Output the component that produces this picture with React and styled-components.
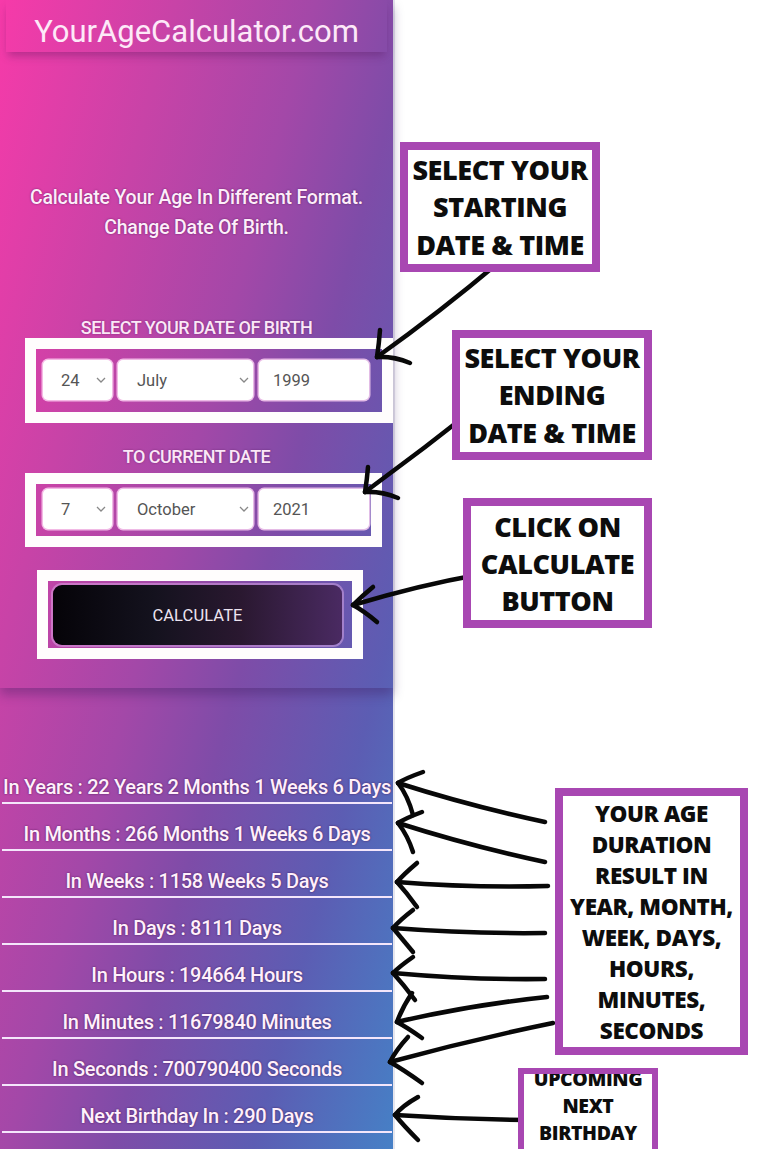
import React from "react";
import styled, { createGlobalStyle } from "styled-components";

const GlobalStyle = createGlobalStyle`
  html, body { margin: 0; padding: 0; background: #fff; }
  body { width: 776px; height: 1149px; overflow: hidden; }
`;

const Canvas = styled.div`
  position: relative;
  width: 776px;
  height: 1149px;
  background: #fff;
  overflow: hidden;
`;

const Phone = styled.div`
  width: 393px;
  height: 1149px;
  display: flex;
  flex-direction: column;
  background: linear-gradient(105deg, #f73aa9 0%, #c843a7 25%, #a348a8 45%, #7e4ca8 60%, #5c5db3 80%, #4680c6 100%);
  box-shadow: 2px 0 0 #e6e6ee;
  font-family: Roboto, "Liberation Sans", sans-serif;
`;

const TopCard = styled.section`
  height: 688px;
  flex: none;
  display: flex;
  flex-direction: column;
  align-items: center;
  box-shadow: 0 7px 10px rgba(60, 25, 95, 0.35);
  position: relative;
`;

const Header = styled.header`
  align-self: stretch;
  margin: 0 6px;
  height: 52px;
  box-sizing: border-box;
  padding-top: 17px;
  text-align: center;
  font-size: 31px;
  line-height: 30px;
  color: #fde9f8;
  box-shadow: 0 6px 8px -2px rgba(80, 20, 90, 0.35);
`;

const Subtitle = styled.p`
  margin: 131px 0 0;
  text-align: center;
  font-size: 19.5px;
  line-height: 30px;
  font-weight: 500;
  letter-spacing: -0.2px;
  color: #fdeefa;
  text-shadow: 0 0 2px rgba(70, 10, 70, 0.7);
`;

const Label = styled.div`
  margin-top: ${(p) => p.$mt}px;
  font-size: 18px;
  line-height: 20px;
  font-weight: 500;
  letter-spacing: -0.5px;
  color: #fbe7f7;
  text-shadow: 0 0 2px rgba(70, 10, 70, 0.5);
`;

const Frame = styled.div`
  align-self: flex-start;
  margin-left: ${(p) => p.$left}px;
  margin-top: ${(p) => p.$mt}px;
  width: ${(p) => p.$w}px;
  box-sizing: border-box;
  border: 11px solid #fffdfd;
  padding: ${(p) => p.$pad};
  display: flex;
`;

const SelectRow = styled.div`
  display: flex;
  gap: 6px;
`;

const Field = styled.div`
  width: ${(p) => p.$w}px;
  height: 40px;
  box-sizing: border-box;
  background: #fff;
  border-radius: 5px;
  box-shadow: 0 0 0 1.5px rgba(255, 215, 245, 0.8);
  display: flex;
  align-items: center;
  justify-content: space-between;
  padding: 0 ${(p) => p.$pr}px 0 ${(p) => p.$pl}px;
  font-size: 16.5px;
  color: #555;
`;

const Chevron = () => (
  <svg width="10" height="6" viewBox="0 0 10 6">
    <path d="M1 1 L5 5 L9 1" fill="none" stroke="#888" strokeWidth="1.3" />
  </svg>
);

const CalcButton = styled.button`
  width: 289px;
  height: 60px;
  border: none;
  border-radius: 9px;
  background: linear-gradient(to right, #050308 0%, #14121e 35%, #2a1830 65%, #4a2a62 100%);
  box-shadow: 0 0 0 2px rgba(220, 170, 230, 0.5);
  color: #ece4f0;
  font-family: Roboto, "Liberation Sans", sans-serif;
  font-size: 16.5px;
  letter-spacing: 0.1px;
`;

const Results = styled.section`
  padding-top: 84px;
  display: flex;
  flex-direction: column;
`;

const ResultRow = styled.div`
  margin: 0 1px 15px 2px;
  height: 30px;
  border-bottom: 2px solid #f4e6fb;
  text-align: center;
  font-size: 20px;
  line-height: 30px;
  font-weight: 500;
  letter-spacing: -0.3px;
  color: #fff0fb;
  white-space: nowrap;
  text-shadow: 0 0 2px rgba(60, 10, 70, 0.8);
`;

const Note = styled.div`
  position: absolute;
  left: ${(p) => p.$x}px;
  top: ${(p) => p.$y}px;
  width: ${(p) => p.$w}px;
  height: ${(p) => p.$h}px;
  box-sizing: border-box;
  border: ${(p) => p.$b}px solid #a847b2;
  background: #fff;
  overflow: hidden;
  display: flex;
  flex-direction: column;
  justify-content: ${(p) => (p.$top ? "flex-start" : "center")};
  align-items: center;
  font-family: "Open Sans", "DejaVu Sans", sans-serif;
  font-weight: 800;
  color: #0d0d0d;
  font-size: ${(p) => p.$fs}px;
  line-height: ${(p) => p.$lh}px;
  letter-spacing: -0.4px;
  text-align: center;
  white-space: nowrap;
`;

const NoteText = styled.div`
  margin-top: ${(p) => p.$mt || 0}px;
`;

const ArrowLayer = styled.svg`
  position: absolute;
  left: 0;
  top: 0;
  pointer-events: none;
`;

const arrows = [
  // starting date
  "M498 263 Q440 312 377 357",
  "M380 330 Q379 344 377 357",
  "M410 363 Q393 356 377 357",
  // ending date
  "M483 402 Q425 448 365 492",
  "M368 467 Q367 480 365 492",
  "M398 498 Q381 491 365 492",
  // calculate
  "M477 575 Q420 585 353 605",
  "M373 587 Q362 596 353 605",
  "M377 622 Q364 611 353 605",
  // results
  "M545 822 Q470 806 398 783",
  "M423 772 Q406 778 398 783",
  "M413 815 Q408 796 398 783",
  "M545 862 Q470 846 398 823",
  "M422 812 Q406 818 398 823",
  "M413 852 Q408 836 398 823",
  "M548 886 Q470 888 397 882",
  "M417 863 Q404 874 397 882",
  "M417 907 Q407 893 397 882",
  "M545 933 Q470 934 393 928",
  "M413 910 Q400 920 393 928",
  "M413 952 Q403 940 393 928",
  "M545 979 Q470 980 393 973",
  "M413 957 Q400 966 393 973",
  "M415 1000 Q404 985 393 973",
  "M547 997 Q470 1005 397 1022",
  "M412 993 Q402 1008 397 1022",
  "M422 1038 Q408 1028 397 1022",
  "M553 1023 Q470 1040 390 1062",
  "M408 1037 Q396 1050 390 1062",
  "M422 1083 Q404 1070 390 1062",
  "M547 1120 Q470 1120 395 1115",
  "M418 1097 Q402 1106 395 1115",
  "M418 1140 Q404 1126 395 1115",
];

const results = [
  "In Years : 22 Years 2 Months 1 Weeks 6 Days",
  "In Months : 266 Months 1 Weeks 6 Days",
  "In Weeks : 1158 Weeks 5 Days",
  "In Days : 8111 Days",
  "In Hours : 194664 Hours",
  "In Minutes : 11679840 Minutes",
  "In Seconds : 700790400 Seconds",
  "Next Birthday In : 290 Days",
];

const DateRow = ({ day, month, year }) => (
  <SelectRow>
    <Field $w={69} $pl={18} $pr={6}>
      <span>{day}</span>
      <Chevron />
    </Field>
    <Field $w={135} $pl={19} $pr={4}>
      <span>{month}</span>
      <Chevron />
    </Field>
    <Field $w={110} $pl={14} $pr={8}>
      <span>{year}</span>
    </Field>
  </SelectRow>
);

export default function App() {
  return (
    <Canvas>
      <GlobalStyle />
      <Phone>
        <TopCard>
          <Header>YourAgeCalculator.com</Header>
          <Subtitle>
            Calculate Your Age In Different Format.
            <br />
            Change Date Of Birth.
          </Subtitle>
          <Label $mt={75}>SELECT YOUR DATE OF BIRTH</Label>
          <Frame $left={25} $mt={0} $w={368} $pad="11px 0 12px 7px">
            <DateRow day="24" month="July" year="1999" />
          </Frame>
          <Label $mt={24}>TO CURRENT DATE</Label>
          <Frame $left={25} $mt={6} $w={357} $pad="5px 0 7px 7px">
            <DateRow day="7" month="October" year="2021" />
          </Frame>
          <Frame $left={37} $mt={23} $w={326} $pad="4px 0 3px 5px">
            <CalcButton>CALCULATE</CalcButton>
          </Frame>
        </TopCard>
        <Results>
          {results.map((r) => (
            <ResultRow key={r}>{r}</ResultRow>
          ))}
        </Results>
      </Phone>

      <ArrowLayer width="776" height="1149" viewBox="0 0 776 1149">
        {arrows.map((d, i) => (
          <path key={i} d={d} fill="none" stroke="#080808" strokeWidth="4.5" strokeLinecap="round" />
        ))}
      </ArrowLayer>

      <Note $x={400} $y={142} $w={200} $h={130} $b={8} $fs={27} $lh={37.5}>
        <NoteText>SELECT YOUR<br />STARTING<br />DATE &amp; TIME</NoteText>
      </Note>
      <Note $x={452} $y={330} $w={200} $h={130} $b={8} $fs={27} $lh={37.5}>
        <NoteText>SELECT YOUR<br />ENDING<br />DATE &amp; TIME</NoteText>
      </Note>
      <Note $x={463} $y={498} $w={189} $h={130} $b={8} $fs={27} $lh={37}>
        <NoteText>CLICK ON<br />CALCULATE<br />BUTTON</NoteText>
      </Note>
      <Note $x={555} $y={788} $w={193} $h={267} $b={8} $fs={22.5} $lh={31}>
        <NoteText>
          YOUR AGE<br />DURATION<br />RESULT IN<br />YEAR, MONTH,<br />WEEK, DAYS,<br />HOURS,<br />MINUTES,<br />SECONDS
        </NoteText>
      </Note>
      <Note $x={518} $y={1068} $w={140} $h={95} $b={6} $fs={19.5} $lh={27} $top>
        <NoteText $mt={-9}>UPCOMING<br />NEXT<br />BIRTHDAY</NoteText>
      </Note>
    </Canvas>
  );
}
